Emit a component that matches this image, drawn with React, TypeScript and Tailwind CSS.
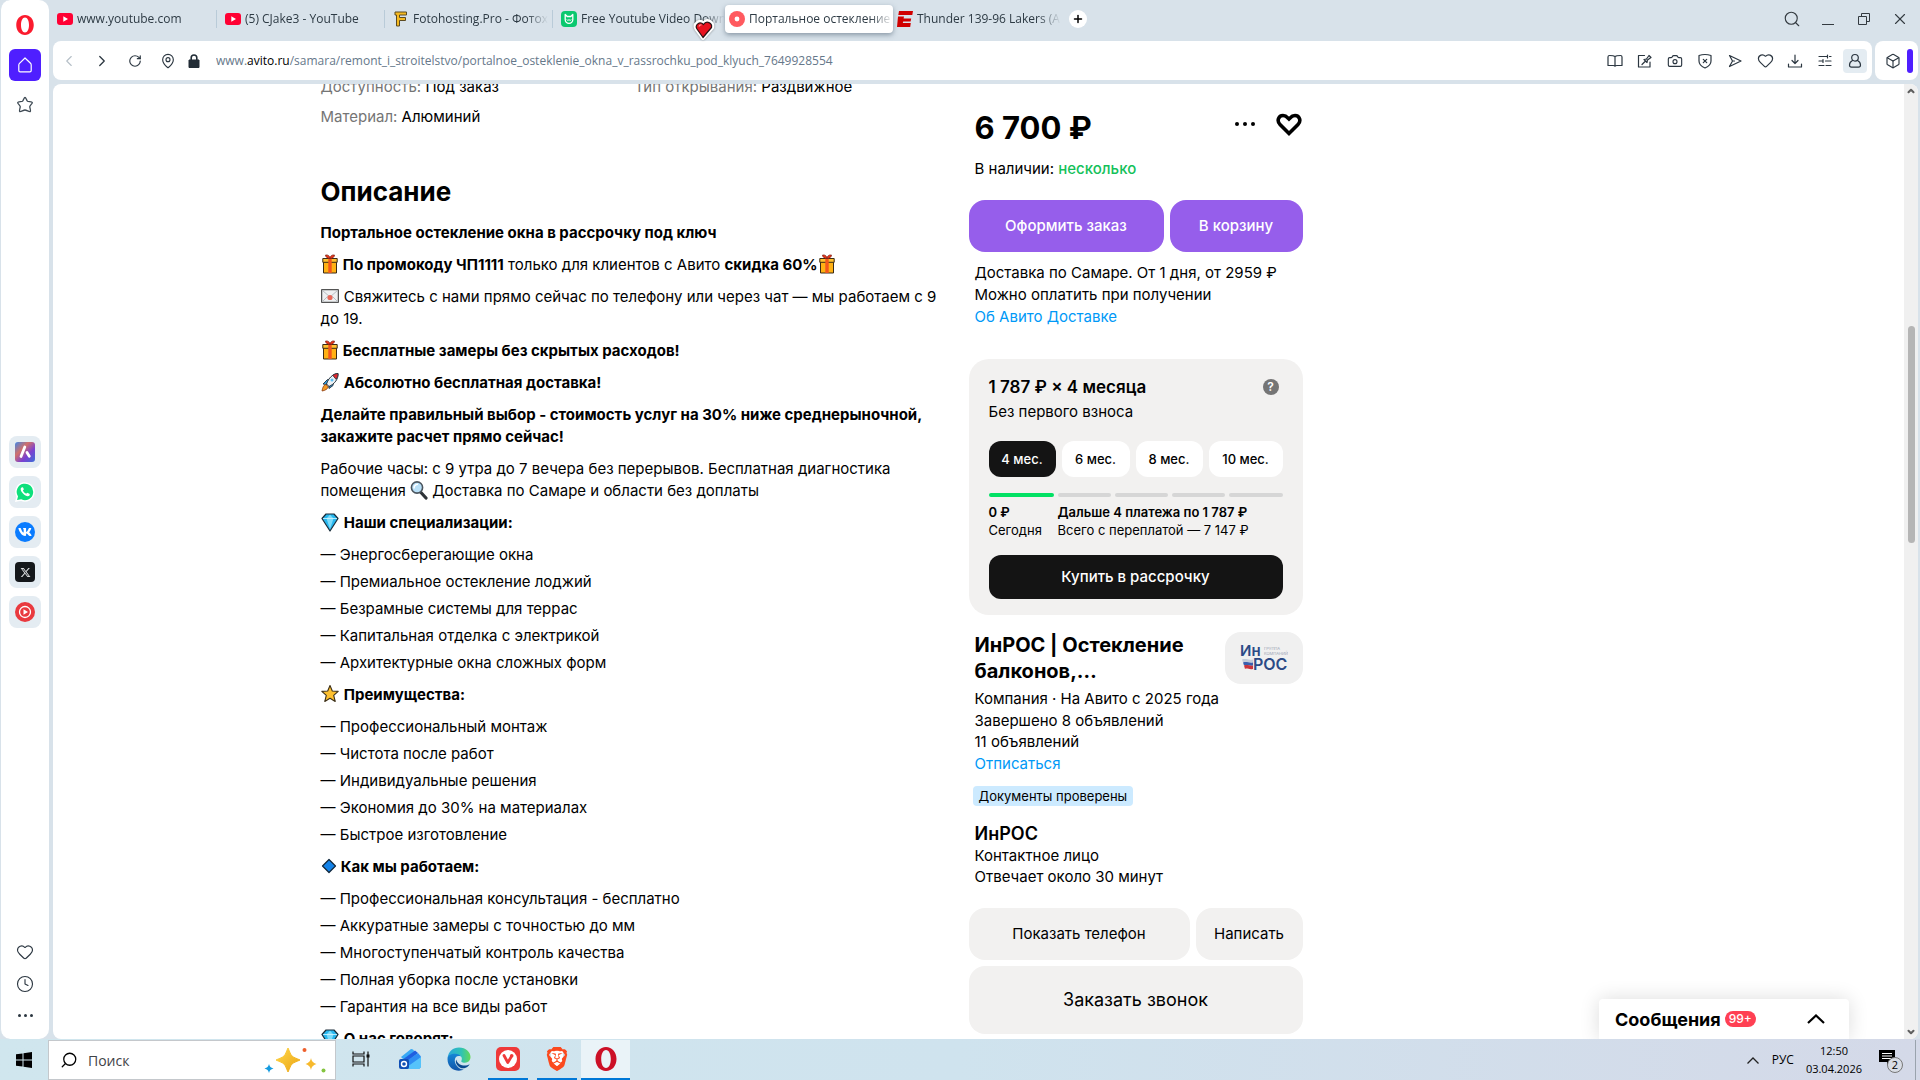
import React from "react";
import {
  Camera, Heart, Search, Box, MapPin, RotateCw,
  ChevronLeft, ChevronRight, ChevronUp, ChevronDown, X, Plus, Clock,
} from "lucide-react";
import { FaVk } from "react-icons/fa";
import { FaXTwitter } from "react-icons/fa6";
import { SiBrave } from "react-icons/si";

/* ---------- small drawings ---------- */

const YouTubeIcon = () => (
  <svg viewBox="0 0 16 16" className="size-4 shrink-0">
    <rect x="0" y="2" width="16" height="12" rx="3" fill="#ff0033" />
    <path d="M6.3 5.2v5.6L11 8z" fill="#fff" />
  </svg>
);

const FotoIcon = () => (
  <svg viewBox="0 0 16 16" className="size-4 shrink-0">
    <path d="M2 1h11.5v3H6.5v2.5h6v3h-6V15H3.5V4H2z" fill="#f5b921" stroke="#5b4a22" strokeWidth="1" />
  </svg>
);

const CatIcon = () => (
  <svg viewBox="0 0 16 16" className="size-4 shrink-0">
    <rect width="16" height="16" rx="4" fill="#0ac86f" />
    <path d="M4.200 3.500v5a3.800 3.800 0 0 0 7.600 0v-5L9.800 5.500H6.2z" fill="none" stroke="#fff" strokeWidth="1.300" strokeLinejoin="round" />
    <path d="M5.800 8.500c.8 1.300 1.600 1.300 2.200 0 .6 1.300 1.400 1.300 2.200 0" fill="none" stroke="#fff" strokeWidth="1" />
  </svg>
);

const RecordIcon = () => (
  <svg viewBox="0 0 16 16" className="size-4 shrink-0">
    <circle cx="8" cy="8" r="8" fill="#ff5a5f" />
    <circle cx="8" cy="8" r="2.4" fill="#fff" />
  </svg>
);

const EspnIcon = () => (
  <svg viewBox="0 0 16 16" className="size-4 shrink-0">
    <path d="M2 0h14l-.7 4H1.3zM1 5.5h6l-.4 2h7.6l-.6 3H6.2l-.4 1.500h8L13.200 16H0z" fill="#d00000" />
  </svg>
);

const OperaLogo = ({ big = false }: { big?: boolean }) => (
  <svg viewBox="0 0 24 24" className={big ? "size-6 shrink-0" : "size-5 shrink-0"}>
    <path
      fillRule="evenodd"
      fill={big ? "#cc1027" : "#fb1b2e"}
      d="M12 0c6 0 10.500 5 10.500 12s-4.500 12-10.500 12S1.500 19 1.500 12 6 0 12 0zm0 3C9 3 7.200 7 7.200 12S9 21 12 21s4.800-4 4.800-9S15 3 12 3z"
    />
  </svg>
);

const GiftIcon = () => (
  <svg viewBox="0 0 16 20" className="mx-px inline-block h-5 w-4 align-[-4px]">
    <path d="M1.500 7.500h13V19h-13z" fill="#ffb114" stroke="#3b2b16" strokeWidth="1" />
    <path d="M.8 4.500h14.400v3.800H.8z" fill="#ffc02e" stroke="#3b2b16" strokeWidth="1" />
    <path d="M6.300 4.500h3.400V19H6.300z" fill="#f2571c" />
    <path d="M8 4.500C6 4.500 3.500 3.500 3.500 1c2.500-.500 4.500 1 4.500 3.500C8 2 10 .5 12.500 1c0 2.500-2.500 3.500-4.500 3.500z" fill="#e8361b" stroke="#7a1d10" strokeWidth=".7" />
  </svg>
);

const EnvelopeIcon = () => (
  <svg viewBox="0 0 18 16" className="mr-px inline-block h-4 w-[18px] align-[-2px]">
    <rect x=".7" y="1.700" width="16.600" height="12.600" fill="#eef0f2" stroke="#2b2b2b" />
    <path d="M1 14l5.500-5.500M17 14l-5.500-5.500M1.500 2.500L9 9l7.500-6.500" fill="none" stroke="#b9bdc2" />
    <circle cx="9" cy="9.500" r="2.600" fill="#e86a5b" />
  </svg>
);

const RocketIcon = () => (
  <svg viewBox="0 0 18 20" className="mr-px inline-block h-5 w-[18px] align-[-4px]">
    <path d="M2 12l4.500-4.500 4 .5-2 5zM8 16.500l4-3 .5-4-5 2.500z" fill="#35a4ea" stroke="#22303c" strokeWidth=".9" />
    <path d="M17 1.500c-5 .2-9.500 4.500-11.500 10.500l2.500 2.500C13.500 12 17.500 7 17 1.500z" fill="#eef2f5" stroke="#22303c" />
    <path d="M17 1.500c-2 0-3.800.7-5.300 1.800l3.300 4C16.500 5.500 17.200 3.500 17 1.500z" fill="#e0282e" stroke="#22303c" strokeWidth=".8" />
    <path d="M4.800 12.500C2.500 13 1.500 16 1 19c3-.5 5.500-1.800 6.300-4z" fill="#f59a23" stroke="#8d3f14" strokeWidth=".8" />
    <circle cx="11" cy="8" r="1.500" fill="#5ec0f4" />
  </svg>
);

const LoupeIcon = () => (
  <svg viewBox="0 0 18 20" className="inline-block h-5 w-[18px] align-[-4px]">
    <path d="M10.500 12l5.500 6" stroke="#2e3338" strokeWidth="3.200" strokeLinecap="round" />
    <circle cx="7" cy="7.500" r="5.600" fill="#b9e0f8" stroke="#4b555e" strokeWidth="1.600" />
    <path d="M4 8.500C4 6 5.500 4.500 8 4.300" stroke="#fff" strokeWidth="1.500" fill="none" />
  </svg>
);

const GemIcon = () => (
  <svg viewBox="0 0 18 20" className="mr-px inline-block h-5 w-[18px] align-[-4px]">
    <path d="M5 2h8l4 4.500L9 19 1 6.500z" fill="#28b7ee" stroke="#1b2b38" strokeWidth="1.200" strokeLinejoin="round" />
    <path d="M5.500 6.500L9 2.700l3.500 3.800L9 17z" fill="#7ddcfb" />
    <path d="M2 6.500h14" stroke="#d7f5ff" strokeWidth=".8" />
  </svg>
);

const StarIcon = () => (
  <svg viewBox="0 0 18 20" className="mr-px inline-block h-5 w-[18px] align-[-4px]">
    <path d="M9 1.500l2.300 5.500 5.900.4-4.500 3.900 1.500 6.200L9 14.200l-5.200 3.300 1.500-6.200L.8 7.400 6.700 7z" fill="#fdc02f" stroke="#3d3019" strokeWidth="1.100" strokeLinejoin="round" />
  </svg>
);

const DiamondIcon = () => (
  <svg viewBox="0 0 16 20" className="inline-block h-5 w-4 align-[-4px]">
    <path d="M8 3.500l6.500 6.500L8 16.500 1.500 10z" fill="#1382e8" stroke="#10263a" strokeWidth="1.200" strokeLinejoin="round" />
  </svg>
);

const HeartPointer = () => (
  <svg viewBox="0 0 22 24" className="pointer-events-none absolute top-[17px] left-[693px] z-10 h-6 w-[22px] drop-shadow-[0_0_1px_rgba(0,0,0,0.4)]">
    <path d="M10 21.500L3 12C0 7 6 2 10.500 6 14 1 21 5 19.500 11z" fill="#fff" stroke="#fff" strokeWidth="3" strokeLinejoin="round" />
    <path d="M10 20.500L4 12C1.500 8 6.500 3.800 10.500 7.500 13.500 3 19.500 6 18.500 10.500z" fill="#e8121f" stroke="#2a1214" strokeWidth="1.200" strokeLinejoin="round" />
    <path d="M6 9.500c.4-1.200 1.400-1.700 2.500-1.500" stroke="#ff8f95" fill="none" strokeWidth="1.200" />
  </svg>
);

const LineIcon = ({ children }: { children: React.ReactNode }) => (
  <svg viewBox="0 0 16 16" className="size-4" fill="none" stroke="#2b3640" strokeWidth="1.200" strokeLinecap="round" strokeLinejoin="round">
    {children}
  </svg>
);

/* ---------- browser chrome ---------- */

const tabs = [
  { icon: <YouTubeIcon />, title: "www.youtube.com", sep: true },
  { icon: <YouTubeIcon />, title: "(5) CJake3 - YouTube", sep: true },
  { icon: <FotoIcon />, title: "Fotohosting.Pro - Фотохос", sep: true },
  { icon: <CatIcon />, title: "Free Youtube Video Down", sep: false },
  { icon: <RecordIcon />, title: "Портальное остекление о", active: true, sep: false },
  { icon: <EspnIcon />, title: "Thunder 139-96 Lakers (Ap", sep: false },
];

function TabBar() {
  return (
    <div className="relative flex h-[41px] items-start pt-[5px]">
      {tabs.map((t) => (
        <button
          key={t.title}
          className={
            t.active
              ? "flex h-7 w-[168px] items-center gap-1 rounded bg-white pl-1 shadow-[0_2px_5px_rgba(60,80,100,0.5)]"
              : "flex h-7 w-[168px] items-center gap-1 pl-1"
          }
        >
          {t.icon}
          <span className="min-w-0 flex-1 overflow-hidden text-left text-[12px] leading-5 whitespace-nowrap text-[#2d3a44] [mask-image:linear-gradient(to_right,#000_84%,transparent)]">
            {t.title}
          </span>
          {t.sep && <span className="mr-1 h-[18px] w-px bg-[#b9cbd8]" />}
        </button>
      ))}
      <button aria-label="Новая вкладка" className="mt-[5px] ml-2 flex size-[18px] items-center justify-center rounded-full bg-white">
        <Plus className="size-3" strokeWidth={3} />
      </button>
      <div className="ml-auto flex text-[#333a40]">
        <button aria-label="Поиск вкладок" className="flex h-7 w-9 items-center justify-center">
          <Search className="size-[18px]" strokeWidth={1.5} />
        </button>
        <button aria-label="Свернуть" className="flex h-7 w-9 items-center justify-center">
          <span className="mt-[11px] h-px w-3 bg-[#333a40]" />
        </button>
        <button aria-label="Восстановить" className="flex h-7 w-9 items-center justify-center">
          <svg viewBox="0 0 12 12" className="size-3" fill="none" stroke="#333a40">
            <path d="M.5 3.500h8v8h-8zM3.500 3.500v-3h8v8h-3" />
          </svg>
        </button>
        <button aria-label="Закрыть" className="flex h-7 w-9 items-center justify-center">
          <X className="size-[18px]" strokeWidth={1.5} />
        </button>
      </div>
    </div>
  );
}

const actions: [string, React.ReactNode][] = [
  ["Режим чтения", <LineIcon><path d="M8 3.500C7 2.600 5 2.500 2.500 2.500 1.500 2.500 1 3 1 4v8.500h5c1 0 2 .3 2 .8 0-.5 1-.8 2-.8h5V4c0-1-.5-1.500-1.500-1.500C11 2.500 9 2.600 8 3.500zv9.500" /></LineIcon>],
  ["Заметка", <LineIcon><path d="M7.500 2.500h-6v11.500h11.500V9M5 11.500l3-3M7 6.500c1-.5 2 0 2.500-.5L12 2.500l2 2-3.500 2.500c-.5.500 0 1.500-.5 2.500z" /></LineIcon>],
  ["Снимок", <Camera className="size-4" strokeWidth={1.7} />],
  ["Блокировка рекламы", <LineIcon><path d="M8 1.500c2.500 0 4.500.5 6 1V8c0 3-2.500 5.500-6 7-3.500-1.500-6-4-6-7V2.500c1.500-.5 3.500-1 6-1zM6.300 6.300l3.400 3.400M9.700 6.300L6.300 9.700" /></LineIcon>],
  ["Отправить", <LineIcon><path d="M2.500 2.500L14 8 2.500 13.500 5.500 8zM5.500 8h2" /></LineIcon>],
  ["В избранное", <Heart className="size-[17px]" strokeWidth={1.7} />],
  ["Загрузки", <LineIcon><path d="M8 2v8M5 7.500L8 10.500l3-3M1.500 11v3h13v-3" /></LineIcon>],
  ["Настройки", <LineIcon><path d="M2 3.500h8.500M12.500 3.500H14M2 8h4M8.500 8H14M2 12.500h5M9 12.500h5M10.500 2v3M6 6.500v3" /></LineIcon>],
  ["Профиль", <LineIcon><circle cx="8" cy="4.800" r="3.300" /><path d="M5.500 7.500C3.500 8.500 2.500 10.500 2.500 12c0 1.500.8 2.200 2 2.200h7c1.200 0 2-.7 2-2.200 0-1.500-1-3.500-3-4.500" /></LineIcon>],
];

function Toolbar() {
  const nav = "flex h-8 w-[33px] items-center justify-center text-[#2b3640]";
  return (
    <div className="flex h-[39px] gap-[3px]">
      <div className="flex min-w-0 flex-1 items-center rounded-lg bg-white pr-[5px]">
        <button aria-label="Назад" className="flex h-8 w-8 items-center justify-center text-[#b5bfc7]"><ChevronLeft className="size-[18px]" strokeWidth={1.5} /></button>
        <button aria-label="Вперёд" className={nav}><ChevronRight className="size-[18px]" strokeWidth={1.7} /></button>
        <button aria-label="Обновить" className={nav}><RotateCw className="size-[14px]" strokeWidth={2} /></button>
        <button aria-label="Местоположение" className={nav}><MapPin className="size-4" strokeWidth={1.7} /></button>
        <svg viewBox="0 0 12 14" className="ml-1 h-[14px] w-3">
          <path d="M1 6h10v7.500H1z" fill="#222d36" stroke="#222d36" strokeLinejoin="round" />
          <path d="M3.200 6V3.800a2.800 2.800 0 0 1 5.600 0V6" fill="none" stroke="#222d36" strokeWidth="1.600" />
        </svg>
        <p className="ml-4 flex-1 truncate text-[12px] text-[#66788a]">
          www.<span className="text-black">avito.ru</span>/samara/remont_i_stroitelstvo/portalnoe_osteklenie_okna_v_rassrochku_pod_klyuch_7649928554
        </p>
        <div className="flex gap-[6px]">
          {actions.map(([label, icon], i) => (
            <button key={label} aria-label={label} className={i === 8 ? "flex size-6 items-center justify-center rounded bg-[#e4ecf2]" : "flex size-6 items-center justify-center text-[#2b3640]"}>
              {icon}
            </button>
          ))}
        </div>
      </div>
      <div className="flex w-[43px] items-center rounded-lg bg-white pl-[10px] text-[#2b3640]">
        <Box className="size-4" strokeWidth={1.7} />
        <span className="ml-[6px] h-6 w-[6px] rounded-sm bg-[#4f1fff]" />
      </div>
    </div>
  );
}

const tile = "flex size-8 items-center justify-center rounded-lg bg-[#e4ecf2]";

function Sidebar() {
  return (
    <nav className="flex w-[49px] shrink-0 flex-col items-center rounded-[10px] border-l border-[#d8e2ea] bg-white pt-[15px]">
      <OperaLogo />
      <button aria-label="Главная" className="mt-[14px] flex size-8 items-center justify-center rounded-md bg-[#4f1fff]">
        <svg viewBox="0 0 16 16" className="size-4" fill="none" stroke="#fff" strokeWidth="1.200" strokeLinejoin="round">
          <path d="M8 1l5.500 5.300c.5.500.7 1 .7 1.700v5.500c0 .8-.5 1.300-1.300 1.300H3.100c-.8 0-1.300-.5-1.300-1.300V8c0-.7.2-1.200.7-1.700z" />
        </svg>
      </button>
      <button aria-label="Закладки" className="mt-[15px]">
        <svg viewBox="0 0 18 18" className="size-[18px]" fill="none" stroke="#3c4852" strokeWidth="1.300" strokeLinejoin="round">
          <path d="M9 1.500c1 0 1.500 3 2.500 3.700 1 .6 4.500.3 4.800 1.300.3 1-2.200 2.700-2.500 3.800-.3 1.200 1.300 4.500.5 5.200-.8.600-3.800-1.500-5.300-1.500s-4.500 2.100-5.300 1.500c-.8-.7.8-4 .5-5.200C3.900 9.200 1.400 7.500 1.700 6.500c.3-1 3.800-.7 4.800-1.300C7.500 4.500 8 1.500 9 1.500z" />
        </svg>
      </button>
      <div className="mt-[322px] flex flex-col gap-2">
        <button aria-label="Aria" className={tile}>
          <svg viewBox="0 0 20 20" className="size-5">
            <defs>
              <linearGradient id="aria" x1="0" y1="0" x2="1" y2="1">
                <stop offset="0" stopColor="#3f86e8" />
                <stop offset=".35" stopColor="#d0706a" />
                <stop offset=".65" stopColor="#7b3fd0" />
                <stop offset="1" stopColor="#3b6fd8" />
              </linearGradient>
            </defs>
            <rect width="20" height="20" rx="3" fill="url(#aria)" />
            <path d="M9.800 5L6 14.500M12 10.500l2.300 3.800" stroke="#fff" strokeWidth="2.800" strokeLinecap="round" fill="none" />
          </svg>
        </button>
        <button aria-label="WhatsApp" className={tile}>
          <svg viewBox="0 0 20 20" className="size-5">
            <path d="M1 19l1.200-4.500A9 9 0 1 1 6 18z" fill="#0ee07c" stroke="#fff" strokeWidth="1.500" />
            <path d="M6.500 5.500c-1.500 1-1 3.500 1.500 6s5 3.500 6.500 2l.3-1.500-2.500-1.300-1.200 1c-1.500-.7-2.500-1.700-3.200-3.200l1-1.200-1-2z" fill="#fff" />
          </svg>
        </button>
        <button aria-label="VK" className={tile}>
          <span className="flex size-5 items-center justify-center rounded-full bg-[#0a7cff]"><FaVk className="size-[14px] text-white" /></span>
        </button>
        <button aria-label="X" className={tile}>
          <span className="flex size-5 items-center justify-center rounded bg-[#14171a]"><FaXTwitter className="size-[11px] text-[#d8dadc]" /></span>
        </button>
        <button aria-label="Музыка" className={tile}>
          <svg viewBox="0 0 20 20" className="size-5">
            <circle cx="10" cy="10" r="10" fill="#e93a3f" />
            <circle cx="10" cy="10" r="5.500" fill="none" stroke="#fff" strokeWidth="1.300" />
            <path d="M8.500 7.200v5.600l4.500-2.800z" fill="#fff" />
          </svg>
        </button>
      </div>
      <div className="mt-auto flex flex-col items-center gap-[14px] pb-4 text-[#2b3640]">
        <button aria-label="Избранное"><Heart className="size-[18px]" strokeWidth={1.5} /></button>
        <button aria-label="История"><Clock className="size-[18px]" strokeWidth={1.5} /></button>
        <button aria-label="Ещё" className="flex h-4 items-center gap-[3px]">
          <i className="size-[3px] rounded-full bg-[#2b3640]" />
          <i className="size-[3px] rounded-full bg-[#2b3640]" />
          <i className="size-[3px] rounded-full bg-[#2b3640]" />
        </button>
      </div>
    </nav>
  );
}

/* ---------- listing ---------- */

const Items = ({ items }: { items: string[] }) => (
  <ul className="flex flex-col gap-[5px]">
    {items.map((t) => <li key={t}>— {t}</li>)}
  </ul>
);

function Description() {
  return (
    <section className="w-[628px] shrink-0 text-[15px] leading-[22px] text-black">
      <dl className="-mt-2 grid grid-cols-2 gap-y-2">
        <div><dt className="inline text-[#757575]">Доступность: </dt><dd className="inline">Под заказ</dd></div>
        <div><dt className="inline text-[#757575]">Тип открывания: </dt><dd className="inline">Раздвижное</dd></div>
        <div><dt className="inline text-[#757575]">Материал: </dt><dd className="inline">Алюминий</dd></div>
      </dl>
      <h2 className="mt-12 text-[26px] leading-8 font-bold">Описание</h2>
      <div className="mt-[14px] flex flex-col gap-[10px] whitespace-nowrap">
        <p><b>Портальное остекление окна в рассрочку под ключ</b></p>
        <p><GiftIcon /> <b>По промокоду ЧП1111</b> только для клиентов с Авито <b>скидка 60%</b><GiftIcon /></p>
        <p><EnvelopeIcon /> Свяжитесь с нами прямо сейчас по телефону или через чат — мы работаем с 9<br />до 19.</p>
        <p><GiftIcon /> <b>Бесплатные замеры без скрытых расходов!</b></p>
        <p><RocketIcon /> <b>Абсолютно бесплатная доставка!</b></p>
        <p><b>Делайте правильный выбор - стоимость услуг на 30% ниже среднерыночной,<br />закажите расчет прямо сейчас!</b></p>
        <p>Рабочие часы: с 9 утра до 7 вечера без перерывов. Бесплатная диагностика<br />помещения <LoupeIcon /> Доставка по Самаре и области без доплаты</p>
        <p><GemIcon /> <b>Наши специализации:</b></p>
        <Items items={["Энергосберегающие окна", "Премиальное остекление лоджий", "Безрамные системы для террас", "Капитальная отделка с электрикой", "Архитектурные окна сложных форм"]} />
        <p><StarIcon /> <b>Преимущества:</b></p>
        <Items items={["Профессиональный монтаж", "Чистота после работ", "Индивидуальные решения", "Экономия до 30% на материалах", "Быстрое изготовление"]} />
        <p><DiamondIcon /> <b>Как мы работаем:</b></p>
        <Items items={["Профессиональная консультация - бесплатно", "Аккуратные замеры с точностью до мм", "Многоступенчатый контроль качества", "Полная уборка после установки", "Гарантия на все виды работ"]} />
        <p><GemIcon /> <b>О нас говорят:</b></p>
      </div>
    </section>
  );
}

const SellerLogo = () => (
  <div className="flex h-[52px] w-[78px] shrink-0 items-center justify-center rounded-2xl bg-[#f0f0f0]">
    <svg viewBox="0 0 48 28" className="h-7 w-12" fontFamily="Inter, sans-serif">
      <text x="0" y="12" fontSize="15" fontWeight="600" fill="#2b4a86">Ин</text>
      <text x="24" y="6" fontSize="4" fill="#9aa4b4">ГРУППА</text>
      <text x="24" y="11" fontSize="4" fill="#9aa4b4">КОМПАНИЙ</text>
      <path d="M2 15.500c4-1.500 6 1 11 0v3c-5 1-7-1.500-10 0z" fill="#c3cddb" />
      <path d="M3 18.500c4-1.500 6 1 10 0v3c-4 1-6-1.500-9 0z" fill="#3a5fae" />
      <path d="M4 21.500c4-1.500 6 1 9 0v3.500c-4 1-6-1.500-8 0z" fill="#c9343c" />
      <text x="13" y="26" fontSize="16" fontWeight="600" fill="#2b4a86">РОС</text>
    </svg>
  </div>
);

function Installments() {
  const light = "h-9 rounded-xl bg-white";
  return (
    <section className="mt-8 rounded-[20px] bg-[#f2f1f0] px-5 pt-4 pb-4">
      <div className="flex items-center justify-between">
        <h3 className="text-[17px] leading-6 font-semibold">1 787 ₽ × 4 месяца</h3>
        <button aria-label="Справка" className="mr-1 flex size-4 items-center justify-center rounded-full bg-[#757575] text-[12px] leading-4 font-semibold text-white">?</button>
      </div>
      <p className="mt-0.5 text-[15px] leading-[22px]">Без первого взноса</p>
      <div className="mt-[18px] grid grid-cols-[67fr_68fr_67fr_74fr] gap-[6px] text-[13px] font-medium">
        <button className="h-9 rounded-xl bg-[#141414] text-white">4 мес.</button>
        <button className={light}>6 мес.</button>
        <button className={light}>8 мес.</button>
        <button className={light}>10 мес.</button>
      </div>
      <div className="mt-4 grid grid-cols-[65fr_53fr_53fr_53fr_54fr] gap-1">
        <span className="h-1 rounded-sm bg-[#02e164]" />
        <span className="h-1 rounded-sm bg-[#d6d6d6]" />
        <span className="h-1 rounded-sm bg-[#d6d6d6]" />
        <span className="h-1 rounded-sm bg-[#d6d6d6]" />
        <span className="h-1 rounded-sm bg-[#d6d6d6]" />
      </div>
      <div className="mt-[6px] flex text-[13px] leading-[18px] whitespace-nowrap">
        <div className="w-[69px]"><p className="font-semibold">0 ₽</p><p>Сегодня</p></div>
        <div><p className="font-semibold">Дальше 4 платежа по 1 787 ₽</p><p>Всего с переплатой — 7 147 ₽</p></div>
      </div>
      <button className="mt-4 h-11 w-full rounded-xl bg-[#141414] text-[15px] font-medium text-white">Купить в рассрочку</button>
    </section>
  );
}

function OfferColumn() {
  return (
    <aside className="ml-5 w-[334px] shrink-0 pt-6 text-[15px] leading-[22px] text-black">
      <div className="flex items-center pl-[6px]">
        <p className="text-[31px] leading-10 font-bold">6 700 ₽</p>
        <button aria-label="Действия" className="mr-[21px] -mt-2 ml-auto flex gap-1">
          <i className="size-1 rounded-full bg-black" />
          <i className="size-1 rounded-full bg-black" />
          <i className="size-1 rounded-full bg-black" />
        </button>
        <button aria-label="Добавить в избранное" className="-mt-[6px] mr-px">
          <svg viewBox="0 0 26 24" className="h-6 w-[26px]" fill="none" stroke="#000" strokeWidth="3.600" strokeLinejoin="miter">
            <path d="M13 20.500L4 11.500C.5 8 2.500 2.500 7 2.500c3 0 4.500 2 6 3.500 1.500-1.500 3-3.500 6-3.500 4.500 0 6.500 5.500 3 9z" />
          </svg>
        </button>
      </div>
      <p className="mt-[10px] pl-[6px]">В наличии: <span className="font-medium text-[#14c15a]">несколько</span></p>
      <div className="mt-5 flex gap-[6px] font-medium text-white">
        <button className="h-[52px] flex-[195] rounded-2xl bg-[#965eeb]">Оформить заказ</button>
        <button className="h-[52px] flex-[133] rounded-2xl bg-[#965eeb]">В корзину</button>
      </div>
      <div className="mt-[10px] pl-[6px] whitespace-nowrap">
        <p>Доставка по Самаре. От 1 дня, от 2959 ₽</p>
        <p>Можно оплатить при получении</p>
        <a href="#delivery" className="block leading-[21px] text-[#0099f7]">Об Авито Доставке</a>
      </div>
      <Installments />
      <section className="mt-[17px] pl-[6px]">
        <div className="flex items-start justify-between">
          <h3 className="text-[20px] leading-[26px] font-bold whitespace-nowrap">ИнРОС | Остекление<br />балконов,…</h3>
          <SellerLogo />
        </div>
        <p className="mt-1">Компания · На Авито с 2025 года</p>
        <p className="leading-[21px]">Завершено 8 объявлений</p>
        <p>11 объявлений</p>
        <a href="#unsubscribe" className="block leading-[21px] text-[#0099f7]">Отписаться</a>
        <p className="mt-3 -ml-0.5 inline-block rounded bg-[#cceaff] px-[6px] text-[13px] leading-5">Документы проверены</p>
        <h4 className="mt-4 text-[18px] leading-[22px] font-semibold">ИнРОС</h4>
        <p className="leading-[21px]">Контактное лицо</p>
        <p>Отвечает около 30 минут</p>
      </section>
      <div className="mt-5 grid grid-cols-[221fr_107fr] gap-[6px]">
        <button className="h-[52px] rounded-2xl bg-[#f2f1f0]">Показать телефон</button>
        <button className="h-[52px] rounded-2xl bg-[#f2f1f0]">Написать</button>
        <button className="col-span-2 h-[68px] rounded-2xl bg-[#f2f1f0] text-[18px]">Заказать звонок</button>
      </div>
    </aside>
  );
}

function Page() {
  return (
    <main className="relative flex min-h-0 flex-1 overflow-hidden rounded-lg bg-white font-[Inter,'Noto_Sans',sans-serif]">
      <div className="min-w-0 flex-1">
        <div className="mx-auto flex max-w-[1316px]">
          <Description />
          <OfferColumn />
        </div>
      </div>
      <div className="flex w-[14px] shrink-0 flex-col items-center justify-between bg-[#f0f0f0] pt-0.5 pb-0.5 text-[#606060]">
        <ChevronUp className="size-[10px]" strokeWidth={5} />
        <span className="mt-[230px] mb-auto h-[217px] w-[7px] rounded-full bg-[#b5b5b5]" />
        <ChevronDown className="size-[10px]" strokeWidth={5} />
      </div>
      <button className="absolute right-[69px] bottom-0 flex h-10 w-[250px] items-center rounded-t bg-white pr-6 pl-4 text-[18px] font-bold text-black shadow-[0_0_20px_rgba(0,0,0,0.14)]">
        Сообщения
        <span className="ml-1 rounded-full bg-[#ff4053] px-1 text-[12px] leading-4 font-medium text-white">99+</span>
        <svg viewBox="0 0 18 10" className="ml-auto h-[10px] w-[18px]" fill="none" stroke="#000" strokeWidth="2.200"><path d="M1 9l8-7.500L17 9" /></svg>
      </button>
    </main>
  );
}

/* ---------- taskbar ---------- */

const taskSlot = "flex h-10 w-[49px] items-center justify-center border-b-2 border-transparent";
const runningSlot =
  "flex h-10 w-[49px] items-center justify-center border-b-2 border-transparent bg-[linear-gradient(#0078d7,#0078d7)] bg-[length:40px_2px] bg-bottom bg-no-repeat bg-origin-border";

function Taskbar() {
  return (
    <footer className="flex h-[41px] shrink-0 items-end bg-linear-to-r from-[#d0e6ee] via-[#cfe3ee] to-[#d4d9e8] text-black">
      <button aria-label="Пуск" className="flex h-10 w-12 items-center justify-center">
        <svg viewBox="0 0 16 16" className="size-4"><path d="M0 2.300L6.500 1.400v6.100H0zM7.500 1.200L16 0v7.500H7.500zM0 8.500h6.500v6.100L0 13.700zM7.500 8.500H16V16l-8.500-1.200z" /></svg>
      </button>
      <label className="flex h-10 w-[288px] items-center border border-[#c4c8cc] bg-white pr-[9px] pl-[11px]">
        <Search className="size-[18px] -scale-x-100" strokeWidth={1.7} />
        <input aria-label="Поиск" placeholder="Поиск" className="ml-[10px] w-24 bg-transparent text-[14px] outline-none placeholder:text-[#3f4347]" />
        <svg viewBox="0 0 62 26" className="ml-auto h-[26px] w-[62px]">
          <defs>
            <linearGradient id="spark" x1="0" y1="0" x2="1" y2="1">
              <stop offset="0" stopColor="#ffd84a" />
              <stop offset="1" stopColor="#eba414" />
            </linearGradient>
          </defs>
          <path d="M24 1c1.500 3 2.500 6.500 4 8 1.500 1.500 5 2.500 8 4-3 1.500-6.500 2.500-8 4-1.500 1.500-2.500 5-4 8-1.500-3-2.500-6.500-4-8-1.500-1.500-5-2.500-8-4 3-1.500 6.500-2.500 8-4 1.500-1.500 2.500-5 4-8z" fill="url(#spark)" stroke="url(#spark)" strokeLinejoin="round" />
          <path d="M47 11c.8 3.500 1.800 4.500 5.500 6-3.700 1.500-4.700 2.500-5.500 6-.8-3.500-1.800-4.500-5.500-6 3.700-1.500 4.700-2.500 5.500-6z" fill="#f7b92c" />
          <path d="M5 17c.8 2.800 1.600 3.700 4.500 4.500-2.900.8-3.700 1.700-4.500 4.500-.8-2.800-1.600-3.700-4.500-4.500C3.400 20.700 4.200 19.800 5 17z" fill="#159be0" />
          <circle cx="40.500" cy="3" r="2" fill="#ee5f2c" />
          <circle cx="59.500" cy="23.500" r="2" fill="#84c440" />
        </svg>
      </label>
      <button aria-label="Представление задач" className={taskSlot}>
        <svg viewBox="0 0 18 16" className="h-4 w-[18px]" fill="none" stroke="#111" strokeWidth="1.200"><path d="M1 .5v2.500h11V.5M1 5h11v6H1zM1 15.500V13h11v2.500M16 .5v15" /><path d="M14.500 3.500h3v3h-3z" fill="#111" stroke="none" /></svg>
      </button>
      <button aria-label="Outlook" className={taskSlot}>
        <svg viewBox="0 0 24 24" className="size-6">
          <path d="M3 10L13 2c2 0 3 1 3 2.500L6 13z" fill="#38a8f5" />
          <path d="M4 13L17 3.500 20 6 8 16z" fill="#1f5fe0" />
          <path d="M7 15L20 6l3 3.500V20l-2 2H8z" fill="#2e8df2" />
          <path d="M11 18.500L23 10v10l-2 2H10z" fill="#55c3fa" />
          <rect x="1" y="12" width="10" height="10" rx="2" fill="#0f4fb5" />
          <circle cx="6" cy="17" r="2.500" fill="none" stroke="#fff" strokeWidth="1.400" />
        </svg>
      </button>
      <button aria-label="Edge" className={taskSlot}>
        <svg viewBox="0 0 24 24" className="size-6">
          <defs>
            <linearGradient id="edge-a" x1="0" y1="0" x2="1" y2="0"><stop offset="0" stopColor="#2aa6dc" /><stop offset=".6" stopColor="#2fc2b6" /><stop offset="1" stopColor="#63d957" /></linearGradient>
            <linearGradient id="edge-b" x1="0" y1="0" x2="0" y2="1"><stop offset="0" stopColor="#1786d6" /><stop offset="1" stopColor="#1155a8" /></linearGradient>
          </defs>
          <path d="M.5 11C1.500 4.500 6 .5 12 .5c7 0 11.500 4.700 11.500 9.500 0 3.500-2.500 5.700-5.500 5.700-3.500 0-4-1.400-3.600-2 1.200-2 .3-5.700-4.400-5.700-4.500 0-9 1.500-9.500 3z" fill="url(#edge-a)" />
          <path d="M.5 12C.5 8.500 4 6.800 8 6.800c3 0 5 1.200 5.800 2.600C9.500 8 7.500 11 7.800 14c.4 4.500 5 9 9 8.500-5.300 3-16.300.5-16.300-10.500z" fill="url(#edge-b)" />
          <path d="M9.200 12.500c-1.700 4 2.800 9.500 8 8.800 2-.3 4.300-2 5.500-4-4 2.500-12 1.700-13.500-4.800z" fill="#0b4a8f" />
        </svg>
      </button>
      <button aria-label="Vivaldi" className={runningSlot}>
        <svg viewBox="0 0 24 24" className="size-6">
          <rect width="24" height="24" rx="5" fill="#ef3939" />
          <circle cx="12" cy="12" r="9" fill="#fff" />
          <path d="M8 8.500l3.800 7 3.300-5.500" fill="none" stroke="#ef3939" strokeWidth="2.800" strokeLinecap="round" strokeLinejoin="round" />
          <circle cx="15.700" cy="8.800" r="1.800" fill="#ef3939" />
        </svg>
      </button>
      <button aria-label="Brave" className={runningSlot}>
        <span className="flex items-center justify-center bg-[linear-gradient(#fff,#fff)] bg-[length:12px_16px] bg-center bg-no-repeat">
          <SiBrave className="size-6 text-[#fb4a1e]" />
        </span>
      </button>
      <button aria-label="Opera" className="flex h-10 w-[49px] items-center justify-center border-b-2 border-[#0078d7] bg-[#eaf3f8]"><OperaLogo big /></button>
      <div className="ml-auto flex h-10 items-center text-[12px]">
        <svg viewBox="0 0 12 7" className="h-[7px] w-3" fill="none" stroke="#222" strokeWidth="1.300"><path d="M.5 6.500L6 1l5.500 5.500" /></svg>
        <span className="ml-[13px]">РУС</span>
        <div className="ml-3 text-center text-[11px] leading-[18px]"><p>12:50</p><p>03.04.2026</p></div>
        <div className="relative mr-3 ml-[17px] h-7 w-6">
          <svg viewBox="0 0 16 16" className="mt-1 size-4"><path d="M0 0h16v12h-5l-3 3.500V12H0z" /><path d="M3 3.500h10M3 6h10M3 8.500h10" stroke="#fff" /></svg>
          <span className="absolute top-[11px] left-2 flex size-4 items-center justify-center rounded-full border border-[#777] bg-[#d9dde5] text-[11px]">2</span>
        </div>
      </div>
      <span className="h-10 w-[5px] border-l border-[#9aa3ad]" />
    </footer>
  );
}

export default function App() {
  return (
    <div className="flex h-screen flex-col overflow-hidden bg-[#d8e2ea] font-['Open_Sans','Noto_Sans',sans-serif]">
      <div className="relative flex min-h-0 flex-1">
        <HeartPointer />
        <Sidebar />
        <div className="flex min-w-0 flex-1 flex-col pr-0.5 pl-1">
          <TabBar />
          <Toolbar />
          <div className="h-1 shrink-0" />
          <Page />
        </div>
      </div>
      <Taskbar />
    </div>
  );
}
